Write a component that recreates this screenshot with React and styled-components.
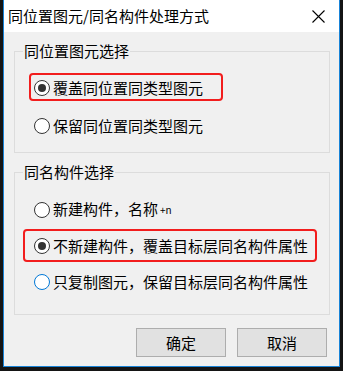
import React from 'react'
import styled, { createGlobalStyle } from 'styled-components'

const GlobalStyle = createGlobalStyle`
  html, body {
    margin: 0;
    padding: 0;
    background: #141414;
  }
  body {
    font-family: "Noto Sans CJK SC", "Noto Sans", sans-serif;
    font-size: 15px;
    color: #000;
  }
`

const Window = styled.div`
  margin-left: 3px;
  width: 335px;
  height: 366px;
  border: 1px solid #1883d7;
  border-top: none;
  background: #f0f0f0;
  display: flex;
  flex-direction: column;
`

const TitleBar = styled.div`
  height: 32px;
  background: #fff;
  display: flex;
  align-items: center;
  justify-content: space-between;
  padding: 0 14px 0 4px;
`

const Title = styled.span`
  font-size: 15px;
  line-height: 18px;
  margin-top: -1px;
`

const CloseIcon = () => (
  <svg width="13" height="13" viewBox="0 0 13 13">
    <path d="M0.5 0.5 L12.5 12.5 M12.5 0.5 L0.5 12.5" stroke="#000" strokeWidth="1.1" />
  </svg>
)

const Content = styled.div`
  padding: 10px 9px 0 10px;
  display: flex;
  flex-direction: column;
`

const Group = styled.fieldset`
  margin: ${p => p.$top || 0}px 0 0 0;
  padding: 0 0 ${p => p.$bottom}px 8px;
  border: 1px solid #dcdcdc;
  min-inline-size: 0;
`

const Legend = styled.legend`
  padding: 0 1px;
  font-size: 15px;
  line-height: 18px;
`

const OptionList = styled.div`
  display: flex;
  flex-direction: column;
  gap: ${p => p.$gap}px;
  padding: ${p => p.$top}px 0 0 11px;
`

const Option = styled.label`
  position: relative;
  height: 26px;
  display: flex;
  align-items: center;
  gap: 3px;
  line-height: 18px;
  white-space: nowrap;
`

const Radio = styled.span`
  position: relative;
  box-sizing: border-box;
  width: 16px;
  height: 16px;
  border-radius: 50%;
  border: 1px solid ${p => (p.$focus ? '#0078d7' : '#333')};
  background: #fff;
  flex: none;

  &::after {
    content: '';
    display: ${p => (p.$checked ? 'block' : 'none')};
    position: absolute;
    left: 3px;
    top: 3px;
    width: 8px;
    height: 8px;
    border-radius: 50%;
    background: #333;
  }
`

const Highlight = styled.span`
  position: absolute;
  left: ${p => p.$left}px;
  top: ${p => p.$top}px;
  width: ${p => p.$width}px;
  height: ${p => p.$height}px;
  box-sizing: border-box;
  border: 2px solid #f21d1d;
  border-radius: 4px;
  pointer-events: none;
`

const Suffix = styled.span`
  font-size: 10px;
  position: relative;
  top: -1px;
  margin-left: 2px;
`

const ButtonRow = styled.div`
  display: flex;
  justify-content: flex-end;
  gap: 11px;
  margin-top: 13px;
  padding-right: 3px;
`

const Button = styled.button`
  width: 90px;
  height: 29px;
  background: #e1e1e1;
  border: 1px solid #adadad;
  font-family: inherit;
  font-size: 15px;
  color: #000;
  padding: 0;
`

export default function App() {
  return (
    <>
      <GlobalStyle />
      <Window>
        <TitleBar>
          <Title>同位置图元/同名构件处理方式</Title>
          <CloseIcon />
        </TitleBar>
        <Content>
          <Group $bottom={13}>
            <Legend>同位置图元选择</Legend>
            <OptionList $top={15} $gap={12}>
              <Option>
                <Highlight $left={-5} $top={-2} $width={194} $height={28} />
                <Radio $checked />
                覆盖同位置同类型图元
              </Option>
              <Option>
                <Radio />
                保留同位置同类型图元
              </Option>
            </OptionList>
          </Group>
          <Group $top={10} $bottom={19}>
            <Legend>同名构件选择</Legend>
            <OptionList $top={16} $gap={10}>
              <Option>
                <Radio />
                <span>新建构件，名称<Suffix>+n</Suffix></span>
              </Option>
              <Option>
                <Highlight $left={-11} $top={-4} $width={294} $height={33} />
                <Radio $checked />
                不新建构件，覆盖目标层同名构件属性
              </Option>
              <Option>
                <Radio $focus />
                只复制图元，保留目标层同名构件属性
              </Option>
            </OptionList>
          </Group>
          <ButtonRow>
            <Button>确定</Button>
            <Button>取消</Button>
          </ButtonRow>
        </Content>
      </Window>
    </>
  )
}
